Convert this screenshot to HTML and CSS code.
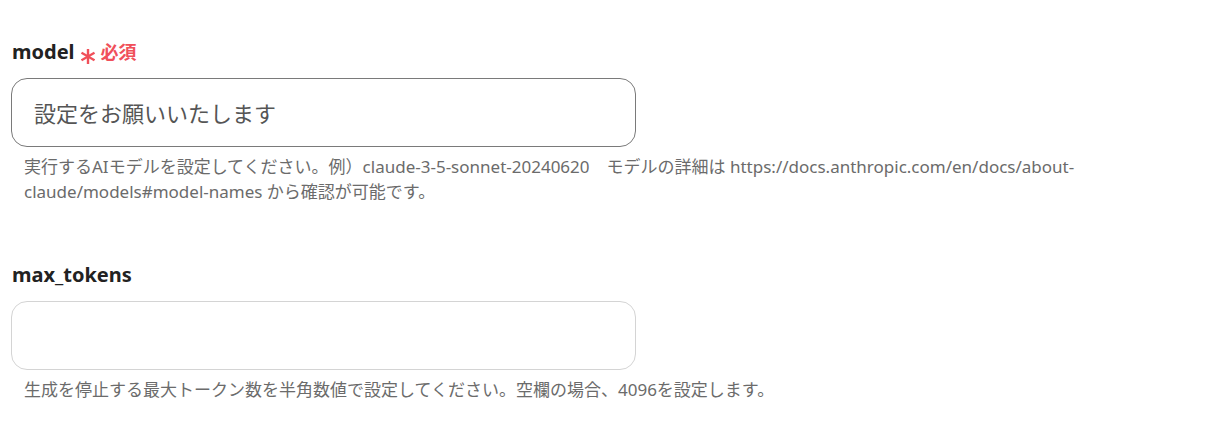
FILE: index.html
```html
<!DOCTYPE html>
<html lang="ja">
<head>
    <meta charset="UTF-8">
    <meta name="viewport" content="width=device-width, initial-scale=1.0">
    <title>Claude 設定</title>
    <link rel="stylesheet" href="styles.css">
</head>
<body>

    <div class="form">
        <div class="field">
            <label class="field-label" for="model">model
                <svg class="req-mark" width="14" height="15" viewBox="0 0 14 15" aria-hidden="true">
                    <g stroke="currentColor" stroke-width="2.4" stroke-linecap="butt">
                        <line x1="7" y1="0" x2="7" y2="15"/>
                        <line x1="0.5" y1="3.7" x2="13.5" y2="11.3"/>
                        <line x1="0.5" y1="11.3" x2="13.5" y2="3.7"/>
                    </g>
                </svg>
                <span class="req-text">必須</span>
            </label>
            <input class="field-input strong" id="model" type="text" placeholder="設定をお願いいたします">
            <p class="field-help">実行するAIモデルを設定してください。例）claude-3-5-sonnet-20240620　モデルの詳細は https://docs.anthropic.com/en/docs/about-claude/models#model-names から確認が可能です。</p>
        </div>

        <div class="field">
            <label class="field-label" for="max_tokens">max_tokens</label>
            <input class="field-input" id="max_tokens" type="text">
            <p class="field-help">生成を停止する最大トークン数を半角数値で設定してください。空欄の場合、4096を設定します。</p>
        </div>
    </div>

</body>
</html>
```

FILE: styles.css
```css
body {
    margin: 0;
    padding: 0;
    background: #fff;
    font-family: "Noto Sans", "Noto Sans CJK JP", sans-serif;
    color: #222;
}

.form { padding: 38px 0 0 12px; display: flex; flex-direction: column; gap: 57px; }
.field { display: flex; flex-direction: column; }

.field-label { font-size: 20px; font-weight: bold; height: 28px; line-height: 28px; display: flex; align-items: center; }
.req-mark { color: #f0505a; margin: 8px 0 0 6px; }
.req-text { color: #f0505a; font-size: 18px; margin-left: 6px; }

.field-input {
    width: 625px;
    height: 69px;
    box-sizing: border-box;
    margin: 12px 0 0 -1px;
    border: 1px solid #d4d4d4;
    border-radius: 16px;
    padding: 0 22px;
    font-size: 22px;
    font-family: inherit;
    color: #333;
    outline: none;
}
.field-input.strong { border-color: #7a7a7a; }
.field-input::placeholder { color: #555; }

.field-help {
    margin: 7px 0 0 12px;
    max-width: 1070px;
    font-size: 17px;
    line-height: 25px;
    color: #6b6b6b;
}
```
